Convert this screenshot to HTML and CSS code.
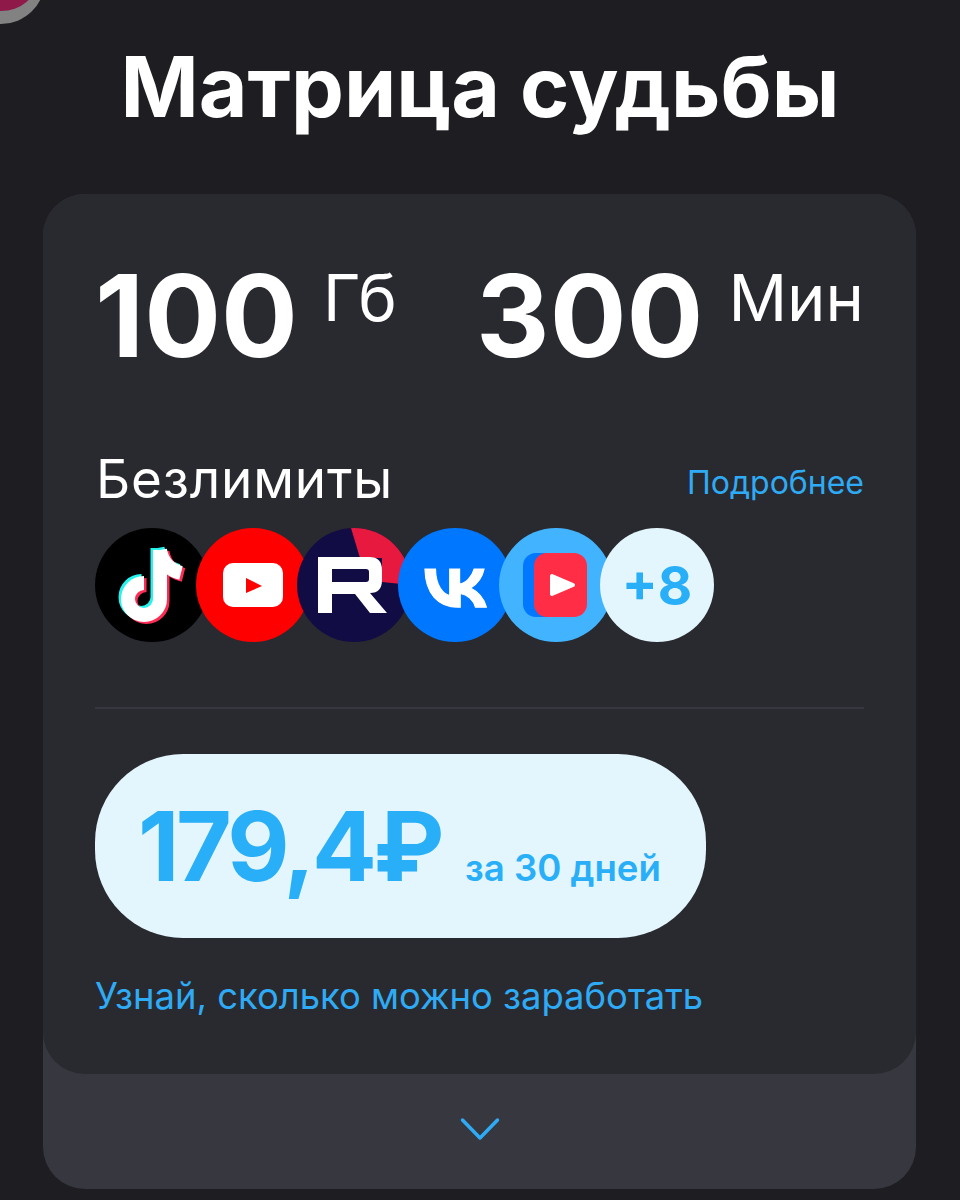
FILE: index.html

```html
<!DOCTYPE html>
<html lang="ru">
<head>
  <meta charset="UTF-8" />
  <meta name="viewport" content="width=device-width, initial-scale=1.0"/>
  <title>Матрица судьбы</title>
  <link rel="stylesheet" href="styles.css">
</head>
<body>
  <div class="avatar"></div>
  <h1 class="title">Матрица судьбы</h1>

  <div class="tariff">
    <div class="card">
      <div class="amounts">
        <div class="amount"><span class="num">100</span><span class="unit">Гб</span></div>
        <div class="amount"><span class="num">300</span><span class="unit">Мин</span></div>
      </div>

      <div class="unlim-head">
        <span class="unlim-title">Безлимиты</span>
        <a href="#" class="more">Подробнее</a>
      </div>

      <div class="apps">
        <div class="app tiktok">
          <svg viewBox="0 0 114 114">
            <defs>
              <path id="note" d="M65 22V71a16 16 0 1 1-16-16M65 22C67 34 74 42 86 45"/>
            </defs>
            <g fill="none" stroke-width="14">
              <use href="#note" stroke="#25f4ee" x="-2.5" y="-2"/>
              <use href="#note" stroke="#fe2c55" x="2.5" y="2"/>
              <use href="#note" stroke="#fff"/>
            </g>
          </svg>
        </div>
        <div class="app youtube">
          <svg viewBox="0 0 114 114">
            <rect x="27" y="35" width="60" height="44" rx="10" fill="#fff"/>
            <path d="M50 50L66 58L50 65Z" fill="#f00"/>
          </svg>
        </div>
        <div class="app rutube">
          <svg viewBox="0 0 114 114">
            <path d="M54 0L63 30H85V54L114 57V0Z" fill="#e8193f"/>
            <path fill-rule="evenodd" fill="#fff" d="M21 29H72Q85 29 85 42V52Q85 65 73 65L90 85H73L58 66H35V85H21ZM35 41V54H69Q72 54 72 51V44Q72 41 69 41Z"/>
          </svg>
        </div>
        <div class="app vk">
          <svg viewBox="0 0 114 114">
            <path transform="translate(10.3 13) scale(3.83)" fill="#fff" stroke="#fff" stroke-width=".3" d="M13.07 17.3c-5.47 0-8.59-3.75-8.72-10H7.1c.09 4.58 2.11 6.52 3.71 6.92V7.3h2.59v3.95c1.58-.17 3.24-1.97 3.8-3.95h2.59a7.65 7.65 0 0 1-3.52 5 7.92 7.92 0 0 1 4.12 5h-2.85a4.95 4.95 0 0 0-3.98-3.58v3.58h-.49Z"/>
          </svg>
        </div>
        <div class="app vkvideo">
          <svg viewBox="0 0 114 114">
            <rect x="24" y="25" width="50" height="64" rx="13" fill="#0077ff"/>
            <rect x="35" y="25" width="53" height="64" rx="13" fill="#ff2d46"/>
            <path d="M53 48L74 57L53 66Z" fill="#fff" stroke="#fff" stroke-width="4" stroke-linejoin="round"/>
          </svg>
        </div>
        <div class="app plus">+8</div>
      </div>

      <div class="divider"></div>

      <div class="price">
        <span class="sum">179,4₽</span>
        <span class="period">за 30 дней</span>
      </div>

      <a href="#" class="earn">Узнай, сколько можно заработать</a>
    </div>

    <div class="expand">
      <svg width="40" height="24" viewBox="0 0 40 24">
        <path d="M2.5 3L20 21L37.5 3" fill="none" stroke="#2fabf5" stroke-width="3.5" stroke-linecap="round" stroke-linejoin="round"/>
      </svg>
    </div>
  </div>
</body>
</html>
```

FILE: styles.css

```css
* {
  box-sizing: border-box;
}
html, body {
  height: 1200px;
  overflow: hidden;
}
body {
  margin: 0;
  background: #1e1e22;
  color: #fff;
  font-family: Inter, "Noto Sans", sans-serif;
  position: relative;
}
a {
  text-decoration: none;
  color: #2fabf5;
}
.avatar {
  position: absolute;
  left: -70px;
  top: -70px;
  width: 115px;
  height: 94px;
  background: #8f1a4a;
  border: solid #828282;
  border-width: 8px 8px 13px 8px;
  border-radius: 44px;
}
.title {
  margin: 0;
  padding-top: 37px;
  height: 194px;
  text-align: center;
  font-size: 84px;
  line-height: 100px;
  font-weight: 700;
}
.tariff {
  margin: 0 44px 0 43px;
  height: 995px;
  background: #36373f;
  border-radius: 42px;
}
.card {
  height: 880px;
  background: #292a2f;
  border-radius: 42px;
  padding: 62px 52px 0;
}
.amounts {
  display: flex;
  justify-content: space-between;
  height: 120px;
}
.amount {
  display: flex;
  align-items: flex-start;
}
.num {
  font-size: 114px;
  line-height: 120px;
  font-weight: 700;
}
.unit {
  font-size: 65px;
  line-height: 84px;
  margin-left: 25px;
}
.unlim-head {
  display: flex;
  justify-content: space-between;
  align-items: center;
  margin-top: 79px;
  height: 56px;
}
.unlim-title {
  font-size: 53px;
  line-height: 56px;
  letter-spacing: 0.8px;
  margin: 0 0 8px 1px;
}
.more {
  font-size: 32px;
  line-height: 40px;
}
.apps {
  display: flex;
  margin-top: 17px;
}
.app {
  width: 114px;
  height: 114px;
  border-radius: 50%;
  overflow: hidden;
  flex-shrink: 0;
  margin-left: -13px;
}
.app:first-child {
  margin-left: 0;
}
.app svg {
  display: block;
  width: 114px;
  height: 114px;
}
.tiktok {
  background: #000;
}
.youtube {
  background: #f00;
}
.rutube {
  background: #120c45;
}
.vk {
  background: #0077ff;
}
.vkvideo {
  background: #41b3ff;
}
.plus {
  background: #e3f5fd;
  color: #29aef8;
  font-size: 53px;
  font-weight: 700;
  line-height: 116px;
  text-align: center;
}
.divider {
  height: 2px;
  background: #36373f;
  margin-top: 65px;
}
.price {
  display: flex;
  align-items: baseline;
  width: 611px;
  height: 184px;
  margin-top: 45px;
  padding: 32px 0 0 43px;
  background: #e3f5fd;
  border-radius: 88px;
  color: #29aef8;
}
.sum {
  font-size: 96px;
  line-height: 120px;
  font-weight: 700;
  letter-spacing: -3.5px;
}
.period {
  font-size: 36.6px;
  font-weight: 600;
  margin-left: 24px;
}
.earn {
  display: block;
  margin-top: 34px;
  font-size: 36.4px;
  line-height: 48px;
}
.expand {
  display: flex;
  justify-content: center;
  padding-top: 43px;
}
```
